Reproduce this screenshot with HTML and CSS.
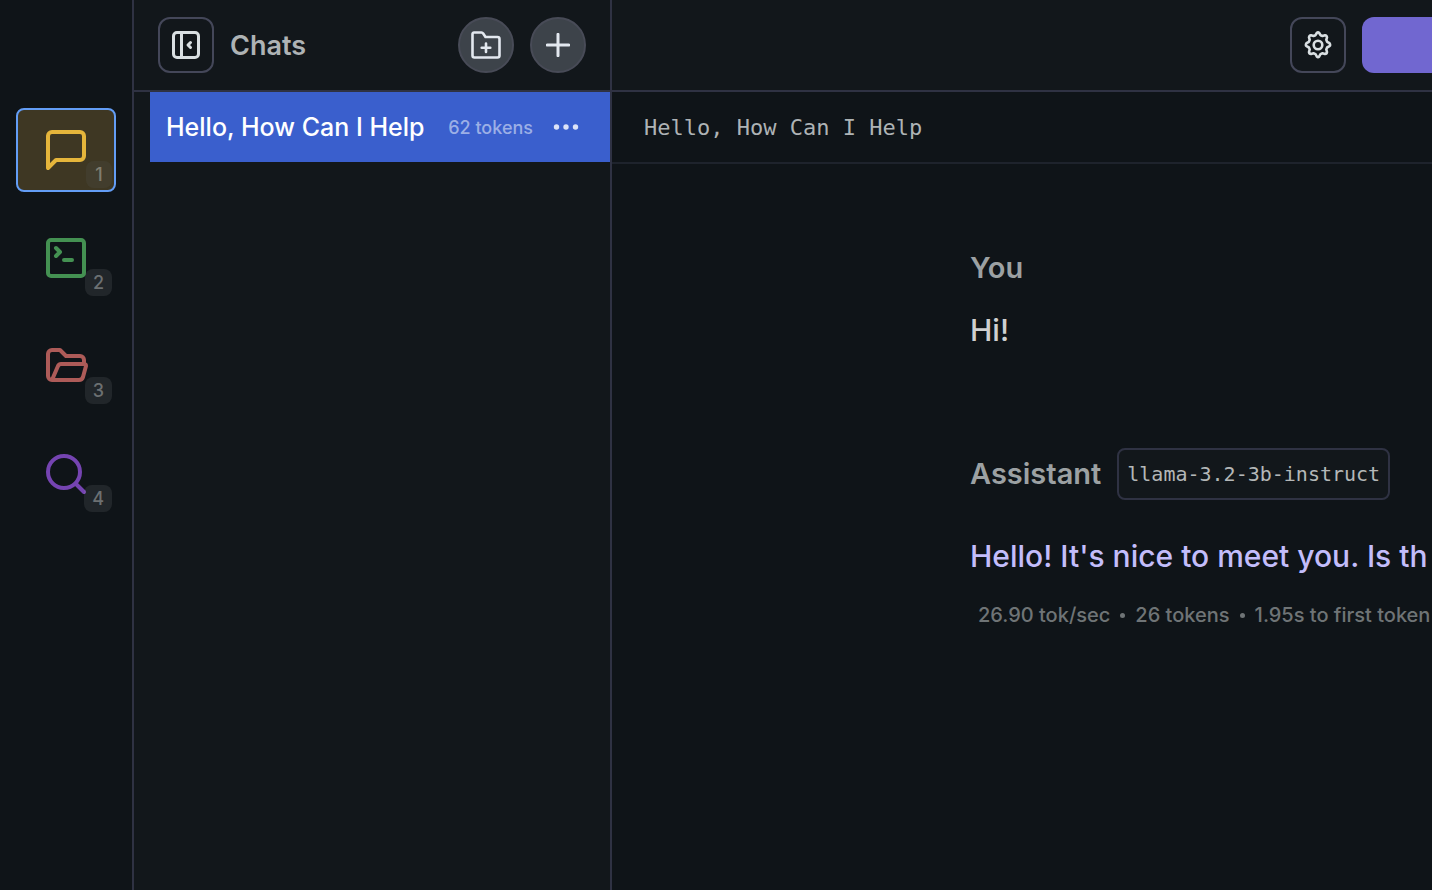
FILE: index.html
```
<!DOCTYPE html>
<html lang="en">
<head>
<meta charset="utf-8">
<title>Chats</title>
<link rel="stylesheet" href="styles.css">
</head>
<body>
<div class="app">
  <nav class="rail" aria-label="Sections">
    <button class="rail-item rail-chat active" aria-label="Chat">
      <svg class="rail-icon" viewBox="0 0 40 40"><path d="M2 38V6a4 4 0 0 1 4-4h28a4 4 0 0 1 4 4v20a4 4 0 0 1-4 4H10z"/></svg>
      <span class="key">1</span>
    </button>
    <button class="rail-item rail-terminal" aria-label="Developer">
      <svg class="rail-icon" viewBox="0 0 40 40"><rect x="2" y="2" width="36" height="36" rx="3"/><path d="M10 10l4 4-4 4M18 22h8"/></svg>
      <span class="key">2</span>
    </button>
    <button class="rail-item rail-folder" aria-label="My models">
      <svg class="rail-icon" viewBox="0 0 40 40"><path d="M6 34a4 4 0 0 1-4-4V8a4 4 0 0 1 4-4h8l6 6h14a4 4 0 0 1 4 4v4M6 34L12 20q1-2 3-2h23q2 0 2 2l-3 11q-1 3-4 3z"/></svg>
      <span class="key">3</span>
    </button>
    <button class="rail-item rail-search" aria-label="Discover">
      <svg class="rail-icon" viewBox="0 0 40 40"><circle cx="18" cy="18" r="16"/><path d="M30 30l8 8"/></svg>
      <span class="key">4</span>
    </button>
  </nav>

  <aside class="sidebar">
    <header class="bar">
      <button class="square" aria-label="Collapse sidebar">
        <svg class="panel-icon" viewBox="0 0 28 28"><rect x="1.5" y="1.5" width="25" height="25" rx="3.5"/><path d="M9.5 1.5v25M18.500 11.500l-2.500 2.500 2.500 2.500"/></svg>
      </button>
      <h1 class="title">Chats</h1>
      <button class="round" aria-label="New folder">
        <svg class="folder-icon" viewBox="0 0 30 28"><path d="M3 1.5h7.5q1 0 1.7 1l2.3 3.5h12a2 2 0 0 1 2 2v16.500a2 2 0 0 1-2 2H3.500a2 2 0 0 1-2-2V3a1.500 1.500 0 0 1 1.500-1.500z"/><path d="M15 12.500v8.500M10.700 16.750h8.600"/></svg>
      </button>
      <button class="round" aria-label="New chat">
        <svg class="plus-icon" viewBox="0 0 24 24"><path d="M12 1.300v21.400M1.300 12h21.400"/></svg>
      </button>
    </header>
    <div class="chat-list">
      <div class="chat-row">
        <a class="chat-name" href="#chat">Hello, How Can I Help</a>
        <span class="chat-tokens">62 tokens</span>
        <button class="more" aria-label="Chat options">
          <svg class="more-icon" viewBox="0 0 26 6"><circle cx="3.500" cy="3" r="2.700"/><circle cx="13" cy="3" r="2.700"/><circle cx="22.500" cy="3" r="2.700"/></svg>
        </button>
      </div>
    </div>
  </aside>

  <main class="main" id="chat">
    <header class="bar main-bar">
      <button class="square" aria-label="Settings">
        <svg class="gear-icon" viewBox="0 0 28 28"><path d="M11.500 4.200L12.800 2q1.200-1.200 2.400 0l1.300 2.200 2 .8 2.500-.7q1.800.2 2 2l-.7 2.500.8 2 2.400 1.400q1.200 1.800 0 3l-2.400 1.300-.8 2 .7 2.500q-.2 1.800-2 2l-2.500-.7-2 .8-1.300 2.400q-1.200 1.200-2.400 0l-1.300-2.400-2-.8-2.500.7q-1.800-.2-2-2l.7-2.500-.8-2-2.400-1.300q-1.200-1.200 0-3l2.400-1.400.8-2-.7-2.500q.2-1.800 2-2l2.500.7z"/><circle cx="14" cy="14" r="4.300"/></svg>
      </button>
      <button class="model-button" aria-label="Select a model"></button>
    </header>
    <h2 class="chat-heading">Hello, How Can I Help</h2>
    <section class="thread">
      <article class="message">
        <h3 class="author">You</h3>
        <p class="text">Hi!</p>
      </article>
      <article class="message">
        <div class="author-line">
          <h3 class="author">Assistant</h3>
          <span class="model-tag">llama-3.2-3b-instruct</span>
        </div>
        <p class="text reply">Hello! It's nice to meet you. Is th</p>
        <p class="stats"><span>26.90 tok/sec</span><span class="dot"></span><span>26 tokens</span><span class="dot"></span><span>1.95s to first token</span></p>
      </article>
    </section>
  </main>
</div>
</body>
</html>
```
FILE: styles.css
```
* { box-sizing: border-box; }

body {
  margin: 0;
  background: #0f1418;
  color: #aeb3b5;
  font-family: Inter, "Liberation Sans", sans-serif;
  font-weight: 500;
  overflow: hidden;
}

button {
  padding: 0;
  background: none;
  border: 2px solid transparent;
  color: inherit;
  font: inherit;
  flex-shrink: 0;
}

svg {
  display: block;
  fill: none;
  stroke: currentColor;
  stroke-width: 3;
  stroke-linecap: round;
  stroke-linejoin: round;
}

h1, h2, h3, p { margin: 0; }

.app {
  display: grid;
  grid-template-columns: 134px 478px minmax(0, 1fr);
  min-height: 100vh;
}

/* Icon rail */
.rail {
  display: flex;
  flex-direction: column;
  gap: 24px;
  padding: 108px 16px 0;
  border-right: 2px solid #2f3243;
}

.rail-item {
  position: relative;
  display: grid;
  place-items: center;
  height: 84px;
  border-radius: 8px;
}

.rail-item.active {
  background: #3e3723;
  border-color: #639df5;
}

.rail-icon {
  width: 40px;
  height: 40px;
  stroke-width: 4;
  overflow: visible;
}

.rail-chat .rail-icon { color: #e5b53b; }
.rail-terminal .rail-icon { color: #449152; }
.rail-folder .rail-icon { color: #ad5b58; }
.rail-search .rail-icon { color: #7544b1; }

.key {
  position: absolute;
  right: 2px;
  bottom: 2px;
  min-width: 26px;
  padding: 0 8px;
  border-radius: 8px;
  background: rgba(255, 255, 255, 0.08);
  color: #6c7072;
  font-size: 18px;
  line-height: 27px;
}

.active .key {
  background: rgba(80, 85, 80, 0.24);
  color: #807d70;
}

/* Shared top bar */
.bar {
  display: flex;
  align-items: center;
  gap: 16px;
  height: 92px;
  padding: 0 24px;
  background: #12171b;
  border-bottom: 2px solid #2f3243;
}

.square, .round {
  display: grid;
  place-items: center;
  width: 56px;
  height: 56px;
  color: #d9dfe2;
}

.square {
  border-color: #444759;
  border-radius: 12px;
}

.round {
  background: #3d434a;
  border-color: #484b57;
  border-radius: 50%;
  color: #e3e8ef;
}

.panel-icon, .gear-icon { width: 28px; height: 28px; }
.gear-icon { stroke-width: 2.6; }
.folder-icon { width: 30px; height: 28px; stroke-width: 2.6; }
.plus-icon { width: 24px; height: 24px; stroke-width: 3; }

.title {
  flex: 1;
  font-size: 27px;
  font-weight: 600;
}

/* Chat list */
.sidebar {
  background: #12171b;
  border-right: 2px solid #2f3243;
}

.chat-list { padding-left: 16px; }

.chat-row {
  display: flex;
  align-items: center;
  height: 70px;
  padding: 0 31px 0 16px;
  background: #3a5fcd;
}

.chat-name {
  flex: 1;
  color: #fff;
  font-size: 25px;
  text-decoration: none;
  white-space: nowrap;
}

.chat-tokens {
  color: #9cafe6;
  font-size: 18px;
  white-space: nowrap;
}

.more {
  margin-left: 20px;
  border: 0;
  color: #dce3f7;
}

.more-icon {
  width: 26px;
  height: 6px;
  fill: currentColor;
  stroke: none;
}

/* Conversation */
.main { overflow: hidden; }

.main-bar {
  justify-content: flex-end;
  padding-right: 0;
}

.model-button {
  width: 70px;
  height: 56px;
  border: 0;
  border-radius: 12px 0 0 12px;
  background: #7167d0;
}

.chat-heading {
  height: 72px;
  padding: 0 32px;
  border-bottom: 2px solid #1e232c;
  font-family: "DejaVu Sans Mono", monospace;
  font-size: 22px;
  font-weight: 400;
  line-height: 72px;
}

.thread {
  display: flex;
  flex-direction: column;
  gap: 98px;
  padding: 84px 0 0 358px;
  white-space: nowrap;
}

.author {
  color: #9ca1a3;
  font-size: 29px;
  font-weight: 600;
  line-height: 40px;
}

.text {
  margin-top: 22px;
  color: #cfd0d1;
  font-size: 30px;
  line-height: 40px;
}

.author-line {
  display: flex;
  align-items: center;
  gap: 16px;
}

.model-tag {
  padding: 0 8px;
  border: 2px solid #2f3243;
  border-radius: 8px;
  background: #12171b;
  color: #b4b7b8;
  font-family: "DejaVu Sans Mono", monospace;
  font-size: 20px;
  font-weight: 400;
  line-height: 48px;
}

.reply {
  margin-top: 36px;
  color: #c3bdfb;
}

.stats {
  display: flex;
  align-items: center;
  gap: 10px;
  margin-top: 24px;
  padding-left: 8px;
  color: #6f7476;
  font-size: 20px;
  line-height: 30px;
}

.dot {
  width: 5px;
  height: 5px;
  border-radius: 50%;
  background: currentColor;
}
```
